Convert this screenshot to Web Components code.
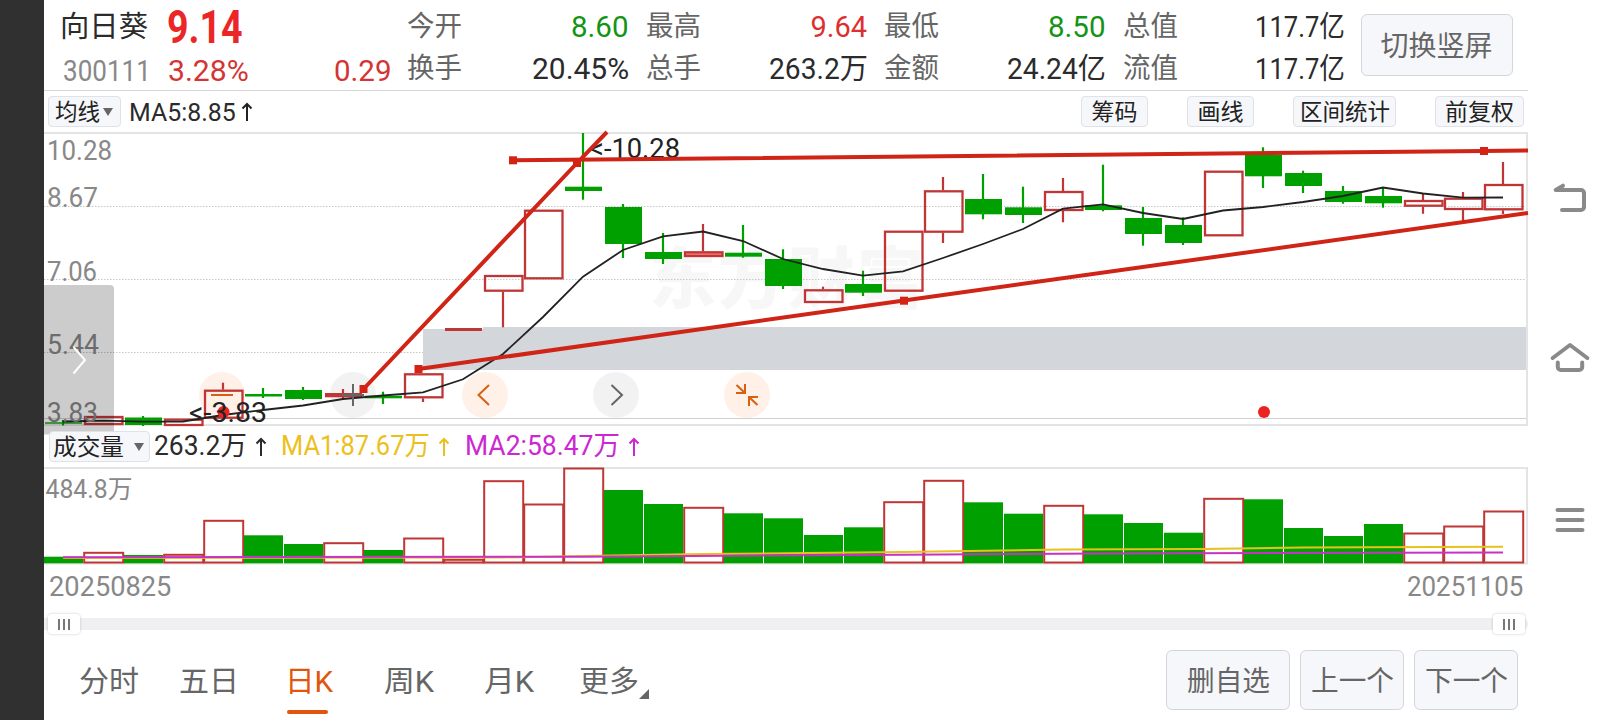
<!DOCTYPE html>
<html lang="zh-CN">
<head>
<meta charset="UTF-8">
<title>向日葵 300111</title>
<style>
  body {
    margin: 0;
    background: #fff;
    font-family: Roboto, "Noto Sans CJK SC", sans-serif;
    color: #2b2b2b;
  }
</style>
</head>
<body>
<stock-app></stock-app>

<script>
// Texto ajustado a uma largura fixa
class FitText extends HTMLElement {
  constructor() {
    super();
    this.attachShadow({ mode: 'open' });
    this.shadowRoot.innerHTML = `
      <style>
        :host { display: inline-block; white-space: nowrap; flex: none; }
        span { display: inline-block; transform-origin: 0 50%; }
      </style>
      <span><slot></slot></span>`;
  }

  connectedCallback() {
    const w = Number(this.getAttribute('w'));
    const span = this.shadowRoot.querySelector('span');
    const natural = span.offsetWidth;
    if (!w || !natural) return;
    this.style.width = w + 'px';
    span.style.transform = `scaleX(${w / natural})`;
  }
}
customElements.define('fit-text', FitText);

class AppButton extends HTMLElement {
  constructor() {
    super();
    this.attachShadow({ mode: 'open' });
    this.shadowRoot.innerHTML = `
      <style>
        :host {
          display: flex;
          align-items: center;
          justify-content: center;
          box-sizing: border-box;
          flex: none;
          height: 60px;
          padding-top: 4px;
          border: 1px solid #d3d6da;
          border-radius: 6px;
          background: #f6f7fa;
          color: #666;
          font-size: 28px;
          line-height: 1;
          white-space: nowrap;
        }
        :host([small]) {
          height: 31px;
          padding-top: 1px;
          border-color: #dfe2e6;
          border-radius: 4px;
          color: #222;
          font-size: 23px;
        }
        .seta { display: none; }
        :host([menu]) { padding-right: 2px; }
        :host([menu]) .seta {
          display: block;
          border: 5px solid transparent;
          border-top: 8px solid #666;
          border-bottom: 0;
          margin-left: var(--gap, 3px);
        }
      </style>
      <slot></slot><i class="seta"></i>`;
  }
}
customElements.define('app-button', AppButton);

class QuoteCell extends HTMLElement {
  constructor() {
    super();
    this.attachShadow({ mode: 'open' });
    this.shadowRoot.innerHTML = `
      <style>
        :host {
          display: flex;
          justify-content: space-between;
          align-items: center;
          height: 42px;
          font-size: 29px;
          line-height: 42px;
        }
        .rotulo { color: #666; font-size: 28px; }
        .alta { color: #dd2f2f; }
        .baixa { color: #149414; }
      </style>
      <fit-text class="rotulo" w="55">${this.getAttribute('label')}</fit-text>
      <fit-text class="${this.getAttribute('tone') || ''}" w="${this.getAttribute('w')}">${this.getAttribute('value')}</fit-text>`;
  }
}
customElements.define('quote-cell', QuoteCell);

class QuoteHeader extends HTMLElement {
  constructor() {
    super();
    this.attachShadow({ mode: 'open' });
    this.shadowRoot.innerHTML = `
      <style>
        :host {
          display: flex;
          box-sizing: border-box;
          height: 91px;
          padding: 6px 15px 0 16px;
          border-bottom: 1px solid #d8d8d8;
        }
        .acao {
          width: 332px;
          margin-right: 15px;
          display: grid;
          grid-template-columns: 107px 1fr auto;
          grid-template-rows: 44px 42px;
          line-height: 42px;
          font-size: 29px;
        }
        .preco { grid-column: 2 / 4; color: #ec2626; font-size: 46px; font-weight: 700; line-height: 43px; }
        .codigo { color: #888; padding-left: 3px; }
        .variacao { color: #d43434; padding-left: 1px; }
        .dados {
          display: grid;
          grid-template-columns: repeat(4, 222px);
          column-gap: 16.5px;
          align-content: start;
          margin-right: 16px;
        }
        app-button { width: 152px; height: 62px; margin-top: 8px; }
      </style>
      <div class="acao">
        <fit-text w="88">向日葵</fit-text>
        <fit-text class="preco" w="76">9.14</fit-text>
        <fit-text class="codigo" w="88">300111</fit-text>
        <fit-text class="variacao" w="81">3.28%</fit-text>
        <fit-text class="variacao" w="58">0.29</fit-text>
      </div>
      <div class="dados">
        <quote-cell label="今开" value="8.60" w="58" tone="baixa"></quote-cell>
        <quote-cell label="最高" value="9.64" w="57" tone="alta"></quote-cell>
        <quote-cell label="最低" value="8.50" w="58" tone="baixa"></quote-cell>
        <quote-cell label="总值" value="117.7亿" w="90"></quote-cell>
        <quote-cell label="换手" value="20.45%" w="97"></quote-cell>
        <quote-cell label="总手" value="263.2万" w="99"></quote-cell>
        <quote-cell label="金额" value="24.24亿" w="99"></quote-cell>
        <quote-cell label="流值" value="117.7亿" w="90"></quote-cell>
      </div>
      <app-button><fit-text w="112">切换竖屏</fit-text></app-button>`;
  }
}
customElements.define('quote-header', QuoteHeader);

class ChartTools extends HTMLElement {
  constructor() {
    super();
    this.attachShadow({ mode: 'open' });
    this.shadowRoot.innerHTML = `
      <style>
        :host {
          display: flex;
          align-items: center;
          height: 41px;
          padding: 0 4px;
          font-size: 26.5px;
          line-height: 43px;
        }
        svg { margin-left: 5px; }
        .espaco { flex: 1; }
      </style>
      <app-button small menu style="width:73px"><fit-text w="45">均线</fit-text></app-button>
      <fit-text w="107" style="margin-left:8px">MA5:8.85</fit-text>
      <svg width="12" height="20" fill="none" stroke="#222" stroke-width="2"><path d="M6 19V2M1.5 6.5 6 2l4.5 4.5"/></svg>
      <span class="espaco"></span>
      <app-button small style="width:67px"><fit-text w="46">筹码</fit-text></app-button>
      <app-button small style="width:67px;margin-left:39px"><fit-text w="46">画线</fit-text></app-button>
      <app-button small style="width:103px;margin-left:39px"><fit-text w="90">区间统计</fit-text></app-button>
      <app-button small style="width:89px;margin-left:39px"><fit-text w="69">前复权</fit-text></app-button>`;
  }
}
customElements.define('chart-tools', ChartTools);

const VERDE = '#00a000';
const VERMELHO = '#c03636';
const PASSO = 40;

// [cor, máxima, topo, base, mínima] em pixels da janela
const VELAS = [
  ['g', 420, 422.3, 423.7, 425.5], ['r', 416, 416, 425, 425], ['g', 416, 417.5, 425, 426], ['r', 418.7, 418.7, 426, 426],
  ['r', 382.7, 389.7, 418.7, 418.7], ['g', 388, 394, 396.5, 398], ['g', 387, 390, 399, 400], ['f', 389, 393, 397.3, 399],
  ['g', 391.7, 395.7, 398.3, 404], ['r', 373.3, 373.3, 398.3, 402], ['f', 328, 328, 331, 331], ['r', 275, 275, 291.7, 327.3],
  ['r', 209.7, 209.7, 279.3, 279.3], ['g', 133, 186.7, 191, 199.7], ['g', 204, 207, 244, 258], ['g', 233, 252, 259, 264],
  ['p', 224, 251.3, 257, 257], ['g', 225, 252.7, 256.7, 257.7], ['g', 249.3, 259, 286, 289], ['r', 286.7, 289.3, 303, 303],
  ['g', 270.7, 284, 292.7, 296], ['r', 230.7, 230.7, 291.7, 291.7], ['r', 177, 190.3, 232.7, 243], ['g', 174, 199, 214.3, 219.3],
  ['g', 186.7, 207.3, 215, 223], ['r', 178, 191, 211, 222.3], ['g', 164.7, 205.3, 210, 211.3], ['g', 207, 218, 234, 245.7],
  ['g', 217.3, 225, 243, 245], ['r', 170.7, 170.7, 236.3, 236.3], ['g', 147.3, 155, 176.3, 188], ['g', 170.7, 173, 186, 193],
  ['g', 186, 191, 202, 203.7], ['g', 187, 196, 203.3, 207.7], ['r', 194, 200, 206.7, 213.7], ['r', 192, 197.7, 210, 221],
  ['r', 162, 184, 210.3, 214]
];
const MEDIA = [421.5, 420.7, 421.7, 421.5, 415, 410, 405.5, 399, 395.5, 392.3, 379.3, 354, 317, 276.7, 250, 236.3, 231.5, 241,
  259, 269, 275.7, 271.3, 258, 244, 229, 208.7, 204.3, 213, 219, 210.5, 207, 202, 196, 187.5, 193.5, 197.7, 197.5];

class CandleChart extends HTMLElement {
  constructor() {
    super();
    this.attachShadow({ mode: 'open' });
    this.shadowRoot.innerHTML = `
      <style>
        :host { display: block; height: 294px; }
        svg { display: block; overflow: visible; }
        text { font-size: 27px; fill: #888; }
        .preto { fill: #222; }
        .marca { font: 900 67px "Noto Sans CJK SC", sans-serif; fill: #f7f7f7; }
      </style>
      <svg width="1484" height="294" viewBox="44 132 1484 294">
        <text class="marca" x="649" y="303" textLength="275">东方财富</text>
        <g stroke="#c8c8c8" stroke-dasharray="1.5 1.5">
          <path d="M44 206.5H1526M44 279.5H1526M44 352.5H1526"/>
        </g>
        <path d="M44 418.5H1526" stroke="#d0d0d0"/>
        <path d="M44 133H1527V425H44" fill="none" stroke="#e4e4e4" stroke-width="2"/>
        <path d="M423 329H483V327H1526V370H423Z" fill="#d3d6db"/>
        <g id="circulos"></g>
        <g id="velas"></g>
        <path id="media" fill="none" stroke="#222" stroke-width="1.8"/>
        <g id="textos">
          <text x="47" y="159.5" textLength="65" lengthAdjust="spacingAndGlyphs">10.28</text>
          <text x="47" y="206.5" textLength="51" lengthAdjust="spacingAndGlyphs">8.67</text>
          <text x="47" y="280.5" textLength="50" lengthAdjust="spacingAndGlyphs">7.06</text>
          <text x="47" y="353.5" textLength="52" lengthAdjust="spacingAndGlyphs">5.44</text>
          <text x="47" y="422" textLength="51" lengthAdjust="spacingAndGlyphs">3.83</text>
        </g>
        <circle cx="223.5" cy="412" r="6" fill="#ec2222"/>
        <circle cx="1264" cy="412" r="6" fill="#ec2222"/>
        <text class="preto" x="189" y="421.5" textLength="78" lengthAdjust="spacingAndGlyphs">&lt;-3.83</text>
        <text class="preto" x="590" y="157.5" textLength="90" lengthAdjust="spacingAndGlyphs">&lt;-10.28</text>
        <g stroke="#cf2416" stroke-width="4" fill="none">
          <path d="M363.5 389 577 163 607 132M513 160.3 1484 151 1528 150.5M418.5 369 904 300.5 1528 213"/>
        </g>
        <g id="pontos" fill="#d42314"></g>
        <g fill="none" stroke="#d8600f" stroke-width="2">
          <path d="M211 395H233M489 385 478.5 395 489 405"/>
          <path d="M736.5 385 745 393M745 384V393H736M749 406V397H758M749 397 757.5 405"/>
        </g>
        <path d="M341.5 395H364M353 384V406M611.5 385 622 395 611.5 405" fill="none" stroke="#666" stroke-width="2"/>
        <path d="M44 285H110a4 4 0 0 1 4 4V434.5H44Z" fill="#000" fill-opacity=".2"/>
        <path d="M73.5 347 85 360 73.5 373.5" fill="none" stroke="#fff" stroke-width="2"/>
      </svg>`;
    this._desenhar();
  }

  _desenhar() {
    const sr = this.shadowRoot;
    sr.getElementById('velas').innerHTML = VELAS.map(([cor, max, topo, base, min], i) => {
      const x = 63 + i * PASSO;
      if (cor === 'g' || cor === 'f') {
        const tinta = cor === 'g' ? VERDE : VERMELHO;
        return `<path d="M${x} ${max}V${min}" stroke="${tinta}" stroke-width="2.2"/>
          <rect x="${x - 18}" y="${topo}" width="37" height="${base - topo}" fill="${tinta}"/>`;
      }
      return `<path d="M${x} ${max}V${topo}M${x} ${base}V${min}" stroke="${VERMELHO}" stroke-width="2.2"/>
        <rect x="${x - 18}" y="${topo + 1}" width="37.5" height="${base - topo - 2}" fill="${cor === 'p' ? '#f47a74' : 'none'}" stroke="${VERMELHO}" stroke-width="2.3"/>`;
    }).join('');

    sr.getElementById('media').setAttribute('d', 'M' + MEDIA.map((y, i) => `${63 + i * PASSO} ${y}`).join('L'));

    sr.getElementById('pontos').innerHTML = [[363.5, 389], [577, 163], [513, 160.3], [1484, 151], [418.5, 369], [904, 300.7]]
      .map(([x, y]) => `<rect x="${x - 4}" y="${y - 4}" width="8" height="8"/>`).join('');

    sr.getElementById('circulos').innerHTML = [222, 353, 485, 616, 747]
      .map((x, i) => `<circle cx="${x}" cy="395" r="23" fill="${i === 1 || i === 3 ? '#f2f2f2' : '#fff0e8'}"/>`).join('');
  }
}
customElements.define('candle-chart', CandleChart);

class VolumeInfo extends HTMLElement {
  constructor() {
    super();
    this.attachShadow({ mode: 'open' });
    this.shadowRoot.innerHTML = `
      <style>
        :host {
          display: flex;
          align-items: center;
          height: 41px;
          padding-left: 5px;
          font-size: 27px;
          line-height: 41px;
        }
        div { display: flex; align-items: center; gap: 8px; }
        .ma1 { color: #ecc01c; margin-left: 14px; }
        .ma2 { color: #cc28d2; margin-left: 15px; }
        app-button { width: 101px; --gap: 10px; margin-right: 4px; }
      </style>
      <app-button small menu><fit-text w="71">成交量</fit-text></app-button>
      <div><fit-text w="93">263.2万</fit-text>
        <svg width="12" height="20" fill="none" stroke="currentColor" stroke-width="2"><path d="M6 19V2M1.5 6.5 6 2l4.5 4.5"/></svg></div>
      <div class="ma1"><fit-text w="149">MA1:87.67万</fit-text>
        <svg width="12" height="20" fill="none" stroke="currentColor" stroke-width="2"><path d="M6 19V2M1.5 6.5 6 2l4.5 4.5"/></svg></div>
      <div class="ma2"><fit-text w="155">MA2:58.47万</fit-text>
        <svg width="12" height="20" fill="none" stroke="currentColor" stroke-width="2"><path d="M6 19V2M1.5 6.5 6 2l4.5 4.5"/></svg></div>`;
  }
}
customElements.define('volume-info', VolumeInfo);

const VOLUMES = [556.7, 552.3, 555, 554.3, 520.3, 535.3, 544, 542.7, 550, 538, 559.3, 480.7, 504, 468, 490, 504, 507.3, 513.3,
  518.3, 535, 527.3, 501.7, 480.3, 502.3, 513.7, 505.3, 514.3, 523, 532.7, 498.3, 499.3, 528, 536, 524, 533, 526, 511];
const CORES = 'grgrrggrgrrrrrgg' + 'rgggg' + 'rrggrgggrggggrrr';

class VolumeChart extends HTMLElement {
  constructor() {
    super();
    this.attachShadow({ mode: 'open' });
    this.shadowRoot.innerHTML = `
      <style>
        :host { display: block; height: 98px; }
        svg { display: block; overflow: visible; }
        text { font-size: 25px; fill: #888; }
      </style>
      <svg width="1484" height="98" viewBox="44 467 1484 98">
        <path d="M44 468H1527V563.5H44" fill="none" stroke="#e4e4e4" stroke-width="2"/>
        <text x="45.5" y="497.5" textLength="87" lengthAdjust="spacingAndGlyphs">484.8万</text>
        <g id="barras"></g>
        <path d="M63 558 503 557.5 583 556 703 554 903 552 1063 549.5 1203 549 1303 547.5 1503 546.7" fill="none" stroke="#e8c21c" stroke-width="2"/>
        <path d="M63 557.3 583 556.7 903 554.7 1103 553.5 1503 552.5" fill="none" stroke="#c832c4" stroke-width="2"/>
      </svg>`;

    this.shadowRoot.getElementById('barras').innerHTML = VOLUMES.map((y, i) => {
      const x = 44 + i * PASSO;
      return CORES[i] === 'g'
        ? `<rect x="${x}" y="${y}" width="39" height="${563.3 - y}" fill="${VERDE}"/>`
        : `<rect x="${x + 0.2}" y="${y + 0.5}" width="39" height="${562 - y}" fill="none" stroke="${VERMELHO}" stroke-width="2"/>`;
    }).join('');
  }
}
customElements.define('volume-chart', VolumeChart);

class RangeSlider extends HTMLElement {
  constructor() {
    super();
    this.attachShadow({ mode: 'open' });
    this.shadowRoot.innerHTML = `
      <style>
        :host {
          display: flex;
          justify-content: space-between;
          align-items: center;
          height: 12px;
          margin-top: 9px;
          padding: 0 3px 0 4px;
          border-radius: 0 6px 6px 0;
          background: #f0f0f3;
        }
        span {
          display: flex;
          justify-content: center;
          align-items: center;
          gap: 3px;
          width: 32px;
          height: 20px;
          border-radius: 4px;
          background: #fff;
          box-shadow: 0 0 3px rgba(0,0,0,0.22);
        }
        i { width: 2px; height: 11px; background: #777; }
      </style>
      <span><i></i><i></i><i></i></span>
      <span><i></i><i></i><i></i></span>`;
  }
}
customElements.define('range-slider', RangeSlider);

class PeriodBar extends HTMLElement {
  constructor() {
    super();
    this.attachShadow({ mode: 'open' });
    this.shadowRoot.innerHTML = `
      <style>
        :host {
          display: flex;
          align-items: flex-start;
          height: 90px;
          padding: 20px 10px 0 35px;
          box-sizing: border-box;
          font-size: 29px;
          line-height: 64px;
          color: #666;
        }
        .aba { height: 64px; }
        .ativa { color: #e0560c; display: flex; flex-direction: column; }
        .ativa fit-text { height: 60px; }
        .ativa i { display: block; width: 41px; height: 4px; margin-left: 2px; border-radius: 2px; background: #e0560c; }
        .canto { border: 5px solid transparent; border-right-color: #666; border-bottom-color: #666; margin: 39px auto 0 0; }
        app-button { margin-left: 10px; }
      </style>
      <fit-text class="aba" w="60" style="margin-right:40px">分时</fit-text>
      <fit-text class="aba" w="60" style="margin-right:46px">五日</fit-text>
      <div class="aba ativa" style="margin-right:51px"><fit-text w="48">日K</fit-text><i></i></div>
      <fit-text class="aba" w="50" style="margin-right:50px">周K</fit-text>
      <fit-text class="aba" w="50" style="margin-right:45px">月K</fit-text>
      <fit-text class="aba" w="60">更多</fit-text><i class="canto"></i>
      <app-button style="width:124px"><fit-text w="83">删自选</fit-text></app-button>
      <app-button style="width:104px"><fit-text w="83">上一个</fit-text></app-button>
      <app-button style="width:104px"><fit-text w="83">下一个</fit-text></app-button>`;
  }
}
customElements.define('period-bar', PeriodBar);

class SystemNav extends HTMLElement {
  constructor() {
    super();
    this.attachShadow({ mode: 'open' });
    this.shadowRoot.innerHTML = `
      <style>
        :host {
          display: flex;
          flex-direction: column;
          align-items: center;
          justify-content: space-between;
          box-sizing: border-box;
          height: 720px;
          padding: 178px 0 180px;
        }
        svg { fill: none; stroke: #8a8a8a; stroke-width: 4; stroke-linecap: round; stroke-linejoin: round; }
      </style>
      <svg width="40" height="40"><path d="M13 7.7 5.7 12H31a3 3 0 0 1 3 3V29a3 3 0 0 1-3 3H12"/></svg>
      <svg width="40" height="40"><path d="M2.700 19 20 6 37.300 19M7.800 23.500V28a3 3 0 0 0 3 3H29.200a3 3 0 0 0 3-3V23.500"/></svg>
      <svg width="40" height="40"><path d="M7.500 10H32.500M7.500 20H32.500M7.500 30H32.500"/></svg>`;
  }
}
customElements.define('system-nav', SystemNav);

class StockApp extends HTMLElement {
  constructor() {
    super();
    this.attachShadow({ mode: 'open' });
    this.shadowRoot.innerHTML = `
      <style>
        :host {
          display: grid;
          grid-template-columns: 44px 1484px 84px;
          height: 720px;
          overflow: hidden;
        }
        .borda { background: #303030; }
        .datas {
          display: flex;
          justify-content: space-between;
          height: 44px;
          padding: 0 5px;
          font-size: 27px;
          line-height: 44px;
          color: #888;
        }
      </style>
      <div class="borda"></div>
      <main>
        <quote-header></quote-header>
        <chart-tools></chart-tools>
        <candle-chart></candle-chart>
        <volume-info></volume-info>
        <volume-chart></volume-chart>
        <div class="datas"><fit-text w="122">20250825</fit-text><fit-text w="116">20251105</fit-text></div>
        <range-slider></range-slider>
        <period-bar></period-bar>
      </main>
      <system-nav></system-nav>`;
  }
}
customElements.define('stock-app', StockApp);
</script>
</body>
</html>
